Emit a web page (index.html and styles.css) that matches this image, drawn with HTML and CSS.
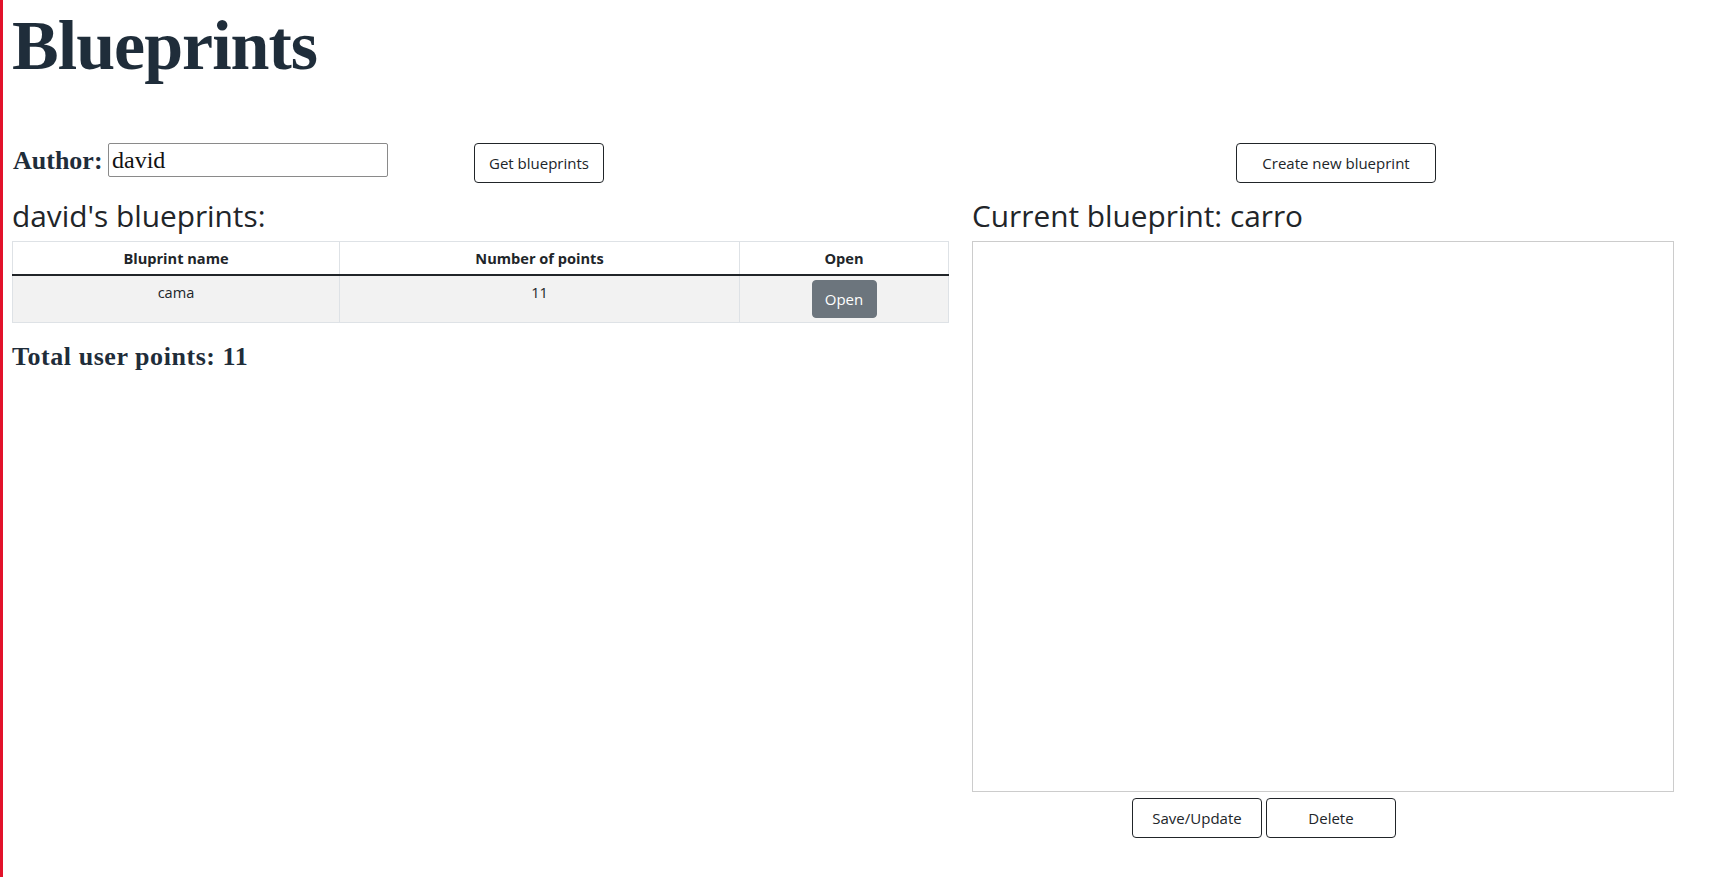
FILE: index.html
```html
<!DOCTYPE html>
<html lang="en">
<head>
<meta charset="utf-8">
<title>Blueprints</title>
<link rel="stylesheet" href="styles.css">
</head>
<body>
<div class="page">
  <h1 class="title">Blueprints</h1>
  <div class="layout">
    <div class="toolbar-left">
      <label class="author-label" for="author">Author:</label>
      <input class="author-input" id="author" type="text" value="david">
      <button class="btn btn-outline btn-get" type="button">Get blueprints</button>
    </div>
    <div class="toolbar-right">
      <button class="btn btn-outline btn-create" type="button">Create new blueprint</button>
    </div>
    <section class="col-left">
      <h2 class="section-title">david's blueprints:</h2>
      <table class="bp-table">
        <colgroup>
          <col class="c1"><col class="c2"><col class="c3">
        </colgroup>
        <thead>
          <tr><th>Bluprint name</th><th>Number of points</th><th>Open</th></tr>
        </thead>
        <tbody>
          <tr><td>cama</td><td>11</td><td><button class="btn-open" type="button">Open</button></td></tr>
        </tbody>
      </table>
      <h3 class="total">Total user points: 11</h3>
    </section>
    <section class="col-right">
      <h2 class="section-title">Current blueprint: carro</h2>
      <canvas class="board" width="700" height="549"></canvas>
      <div class="actions">
        <button class="btn btn-outline btn-action" type="button">Save/Update</button>
        <button class="btn btn-outline btn-action" type="button">Delete</button>
      </div>
    </section>
  </div>
</div>
</body>
</html>
```
FILE: styles.css
```css
* { box-sizing: border-box; }

html, body {
  margin: 0;
  padding: 0;
  background: #ffffff;
}

body {
  font-family: "Open Sans", "Noto Sans", sans-serif;
  font-size: 14.6px;
  color: #212529;
}

.page {
  min-height: 100vh;
  border-left: 3px solid #e2122a;
  padding: 6px 12px 0 9px;
  overflow: hidden;
}

.title {
  margin: 0;
  font-family: "Liberation Serif", "Times New Roman", serif;
  font-weight: 700;
  font-size: 70px;
  line-height: 80px;
  letter-spacing: -1px;
  color: #1f2d3a;
}

.layout {
  margin-top: 57px;
  display: grid;
  grid-template-columns: 936px 728px;
  column-gap: 24px;
  align-items: start;
}

.toolbar-left {
  display: flex;
  align-items: flex-start;
  height: 40px;
}

.author-label {
  font-family: "Liberation Serif", "Times New Roman", serif;
  font-weight: 700;
  font-size: 26px;
  line-height: 34px;
  margin-top: 1px;
  color: #1f2d3a;
  padding-left: 1px;
  width: 96px;
}

.author-input {
  width: 280px;
  height: 34px;
  margin: 0;
  border: 1px solid #8a8a8a;
  border-radius: 2px;
  padding: 0 3px;
  font-family: "Liberation Serif", "Times New Roman", serif;
  font-size: 24px;
  color: #111;
  background: #fff;
}

.btn {
  font-family: "Open Sans", "Noto Sans", sans-serif;
  font-size: 15px;
  color: #212529;
  background: #fff;
  border: 1px solid #212529;
  border-radius: 4px;
  height: 40px;
  padding: 0;
  margin: 0;
  line-height: 38px;
  text-align: center;
}

.btn-get {
  width: 130px;
  margin-left: 86px;
}

.toolbar-right {
  display: flex;
  justify-content: center;
  height: 40px;
}

.btn-create {
  width: 200px;
}

.section-title {
  margin: 14px 0 6px 0;
  font-family: "Open Sans", "Noto Sans", sans-serif;
  font-weight: 400;
  font-size: 29.8px;
  line-height: 38px;
  color: #212529;
}

.bp-table {
  width: 936px;
  border-collapse: collapse;
  table-layout: fixed;
  margin-bottom: 17px;
}

.bp-table .c1 { width: 327px; }
.bp-table .c2 { width: 400px; }
.bp-table .c3 { width: 209px; }

.bp-table th,
.bp-table td {
  border: 1px solid #dee2e6;
  padding: 4px;
  text-align: center;
  vertical-align: top;
  line-height: 24px;
}

.bp-table th {
  font-weight: 700;
  border-bottom: 2px solid #212529;
}

.bp-table tbody tr {
  background: #f2f2f2;
}

.btn-open {
  display: inline-block;
  width: 65px;
  height: 38px;
  margin: 0;
  padding: 0;
  border: 1px solid #6c757d;
  border-radius: 4px;
  background: #6c757d;
  color: #fff;
  font-family: "Open Sans", "Noto Sans", sans-serif;
  font-size: 15px;
  line-height: 36px;
  vertical-align: top;
}

.total {
  margin: 0;
  font-family: "Liberation Serif", "Times New Roman", serif;
  font-weight: 700;
  font-size: 26px;
  line-height: 34px;
  letter-spacing: 0.55px;
  color: #1f2d3a;
}

.board {
  display: block;
  border: 1px solid #cccccc;
  background: #fff;
}

.actions {
  display: flex;
  gap: 4px;
  margin-top: 6px;
  padding-left: 160px;
}

.btn-action {
  width: 130px;
}
```
